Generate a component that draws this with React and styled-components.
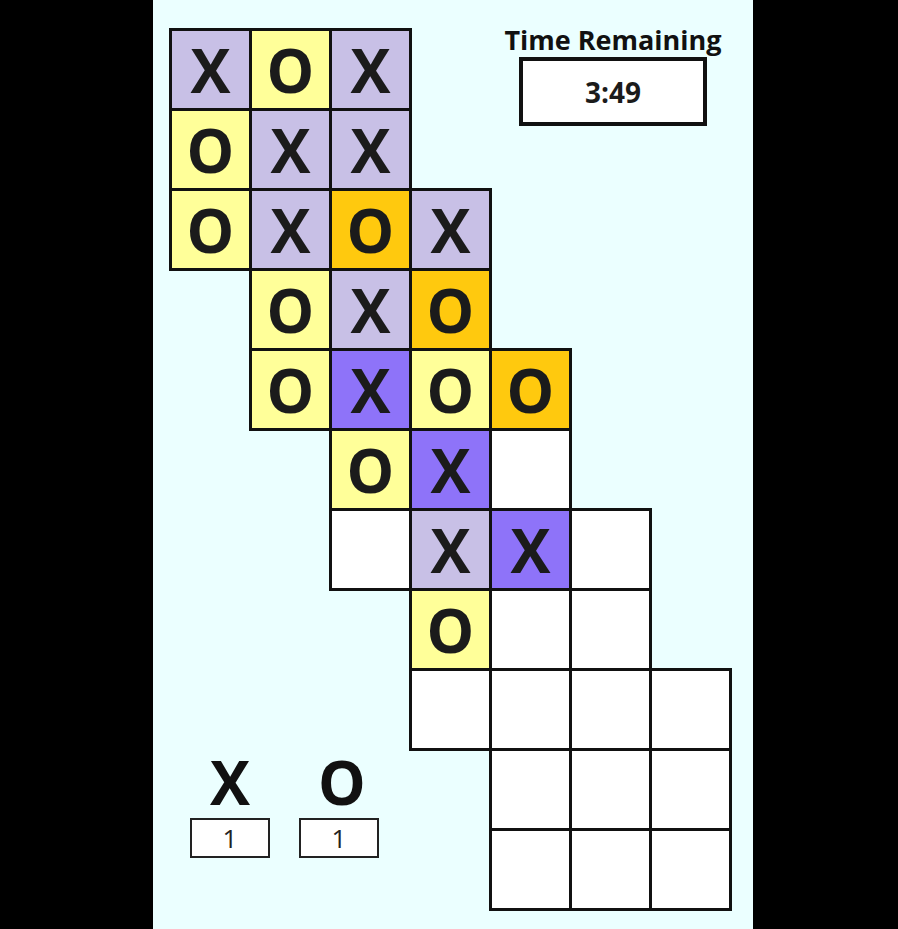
import React from 'react'
import styled, { createGlobalStyle } from 'styled-components'

const GlobalStyle = createGlobalStyle`
  html, body {
    margin: 0;
    padding: 0;
    background: #000;
  }
  body {
    font-family: 'Open Sans', 'Liberation Sans', sans-serif;
  }
`

const FILLS = {
  lav: `#c8c0e6`,
  yel: `#ffff99`,
  org: `#ffc90e`,
  pur: `#8e73f9`,
  wht: `#ffffff`,
}

// [row, col, letter, fill]
const CELLS = [
  [0, 0, `X`, `lav`], [0, 1, `O`, `yel`], [0, 2, `X`, `lav`],
  [1, 0, `O`, `yel`], [1, 1, `X`, `lav`], [1, 2, `X`, `lav`],
  [2, 0, `O`, `yel`], [2, 1, `X`, `lav`], [2, 2, `O`, `org`], [2, 3, `X`, `lav`],
  [3, 1, `O`, `yel`], [3, 2, `X`, `lav`], [3, 3, `O`, `org`],
  [4, 1, `O`, `yel`], [4, 2, `X`, `pur`], [4, 3, `O`, `yel`], [4, 4, `O`, `org`],
  [5, 2, `O`, `yel`], [5, 3, `X`, `pur`], [5, 4, ``, `wht`],
  [6, 2, ``, `wht`], [6, 3, `X`, `lav`], [6, 4, `X`, `pur`], [6, 5, ``, `wht`],
  [7, 3, `O`, `yel`], [7, 4, ``, `wht`], [7, 5, ``, `wht`],
  [8, 3, ``, `wht`], [8, 4, ``, `wht`], [8, 5, ``, `wht`], [8, 6, ``, `wht`],
  [9, 4, ``, `wht`], [9, 5, ``, `wht`], [9, 6, ``, `wht`],
  [10, 4, ``, `wht`], [10, 5, ``, `wht`], [10, 6, ``, `wht`],
]

const Panel = styled.div`
  margin-left: 153px;
  width: 600px;
  min-height: 100vh;
  box-sizing: border-box;
  padding: 28px 0 0 16px;
  background: #ebffff;
`

const Board = styled.div`
  display: grid;
  grid-template-columns: repeat(7, 80px);
  grid-template-rows: repeat(11, 80px);
`

const Cell = styled.div`
  grid-row: ${props => props.row + 1};
  grid-column: ${props => props.col + 1};
  width: 83px;
  height: 83px;
  box-sizing: border-box;
  border: 3px solid #111;
  background: ${props => FILLS[props.fill]};
  display: flex;
  align-items: center;
  justify-content: center;
  font-size: 60px;
  font-weight: 700;
  line-height: 1;
  color: #1b1b1b;
`

const TimerArea = styled.div`
  grid-row: 1 / 3;
  grid-column: 5 / 8;
  display: flex;
  flex-direction: column;
  align-items: center;
  padding-left: 8px;
  margin-top: -6px;
`

const TimerTitle = styled.div`
  font-size: 27px;
  font-weight: 700;
  line-height: 35px;
  color: #111;
  white-space: nowrap;
`

const TimerBox = styled.div`
  width: 188px;
  height: 69px;
  box-sizing: border-box;
  border: 4px solid #111;
  background: #fff;
  display: flex;
  align-items: center;
  justify-content: center;
  font-size: 28px;
  font-weight: 700;
  color: #1b1b1b;
`

const ScoreArea = styled.div`
  grid-row: 10 / 12;
  grid-column: 1 / 4;
  display: flex;
  gap: 29px;
  padding: 4px 0 0 21px;
`

const ScoreGroup = styled.div`
  display: flex;
  flex-direction: column;
  align-items: center;
  gap: 6px;
`

const ScoreMark = styled.div`
  font-size: 60px;
  font-weight: 700;
  line-height: 60px;
  color: #111;
  margin-left: ${props => props.shift || 0}px;
`

const ScoreBox = styled.div`
  width: 80px;
  height: 40px;
  box-sizing: border-box;
  border: 2px solid #222;
  background: #fff;
  display: flex;
  align-items: center;
  justify-content: center;
  font-size: 26px;
  font-weight: 400;
  color: #222;
`

const App = () =>
  <>
    <GlobalStyle />
    <Panel>
      <Board>
        {CELLS.map(([row, col, letter, fill]) =>
          <Cell key={`${row}-${col}`} row={row} col={col} fill={fill}>{letter}</Cell>
        )}
        <TimerArea>
          <TimerTitle>Time Remaining</TimerTitle>
          <TimerBox>3:49</TimerBox>
        </TimerArea>
        <ScoreArea>
          <ScoreGroup>
            <ScoreMark>X</ScoreMark>
            <ScoreBox>1</ScoreBox>
          </ScoreGroup>
          <ScoreGroup>
            <ScoreMark shift={6}>O</ScoreMark>
            <ScoreBox>1</ScoreBox>
          </ScoreGroup>
        </ScoreArea>
      </Board>
    </Panel>
  </>

export default App
